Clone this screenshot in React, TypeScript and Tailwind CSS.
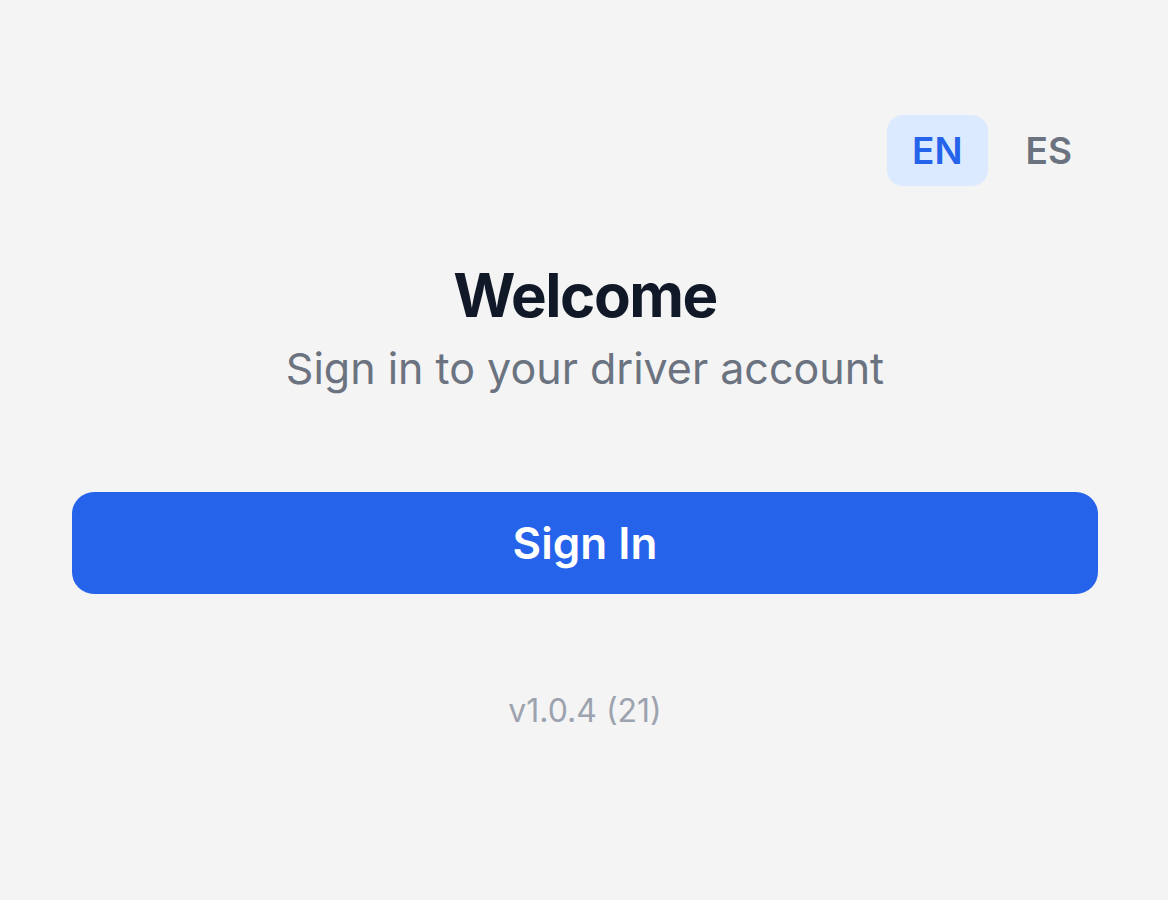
import React, { useState } from 'react';

export default function App() {
  const [lang, setLang] = useState<'EN' | 'ES'>('EN');

  return (
    <div
      className="min-h-[900px] w-full bg-[#f4f4f4] pl-[72px] pr-[70px] pt-[115px]"
      style={{ fontFamily: 'Inter, "Noto Sans", sans-serif' }}
    >
      {/* language switch */}
      <div className="flex justify-end gap-[12px]">
        {(['EN', 'ES'] as const).map((l) => (
          <button
            key={l}
            onClick={() => setLang(l)}
            className={
              lang === l
                ? 'h-[71px] rounded-[16px] bg-[#dbeafe] px-[25px] text-[37px] font-semibold text-[#2563eb]'
                : 'h-[71px] rounded-[16px] px-[26px] text-[37px] font-semibold text-[#6b7280]'
            }
          >
            {l}
          </button>
        ))}
      </div>

      <div className="mt-[73px] flex flex-col items-center">
        <h1 className="text-[60px] font-bold leading-[72px] tracking-[-0.025em] text-[#111827]">Welcome</h1>
        <p className="mt-[8px] text-[43px] leading-[58px] text-[#6b7280]">Sign in to your driver account</p>
      </div>

      <button className="mt-[95px] flex h-[102px] w-full items-center justify-center rounded-[22px] bg-[#2563eb] text-[44px] font-semibold text-white">
        Sign In
      </button>

      <p className="mt-[97px] text-center text-[32px] leading-[40px] text-[#9ca3af]">v1.0.4 (21)</p>
    </div>
  );
}
